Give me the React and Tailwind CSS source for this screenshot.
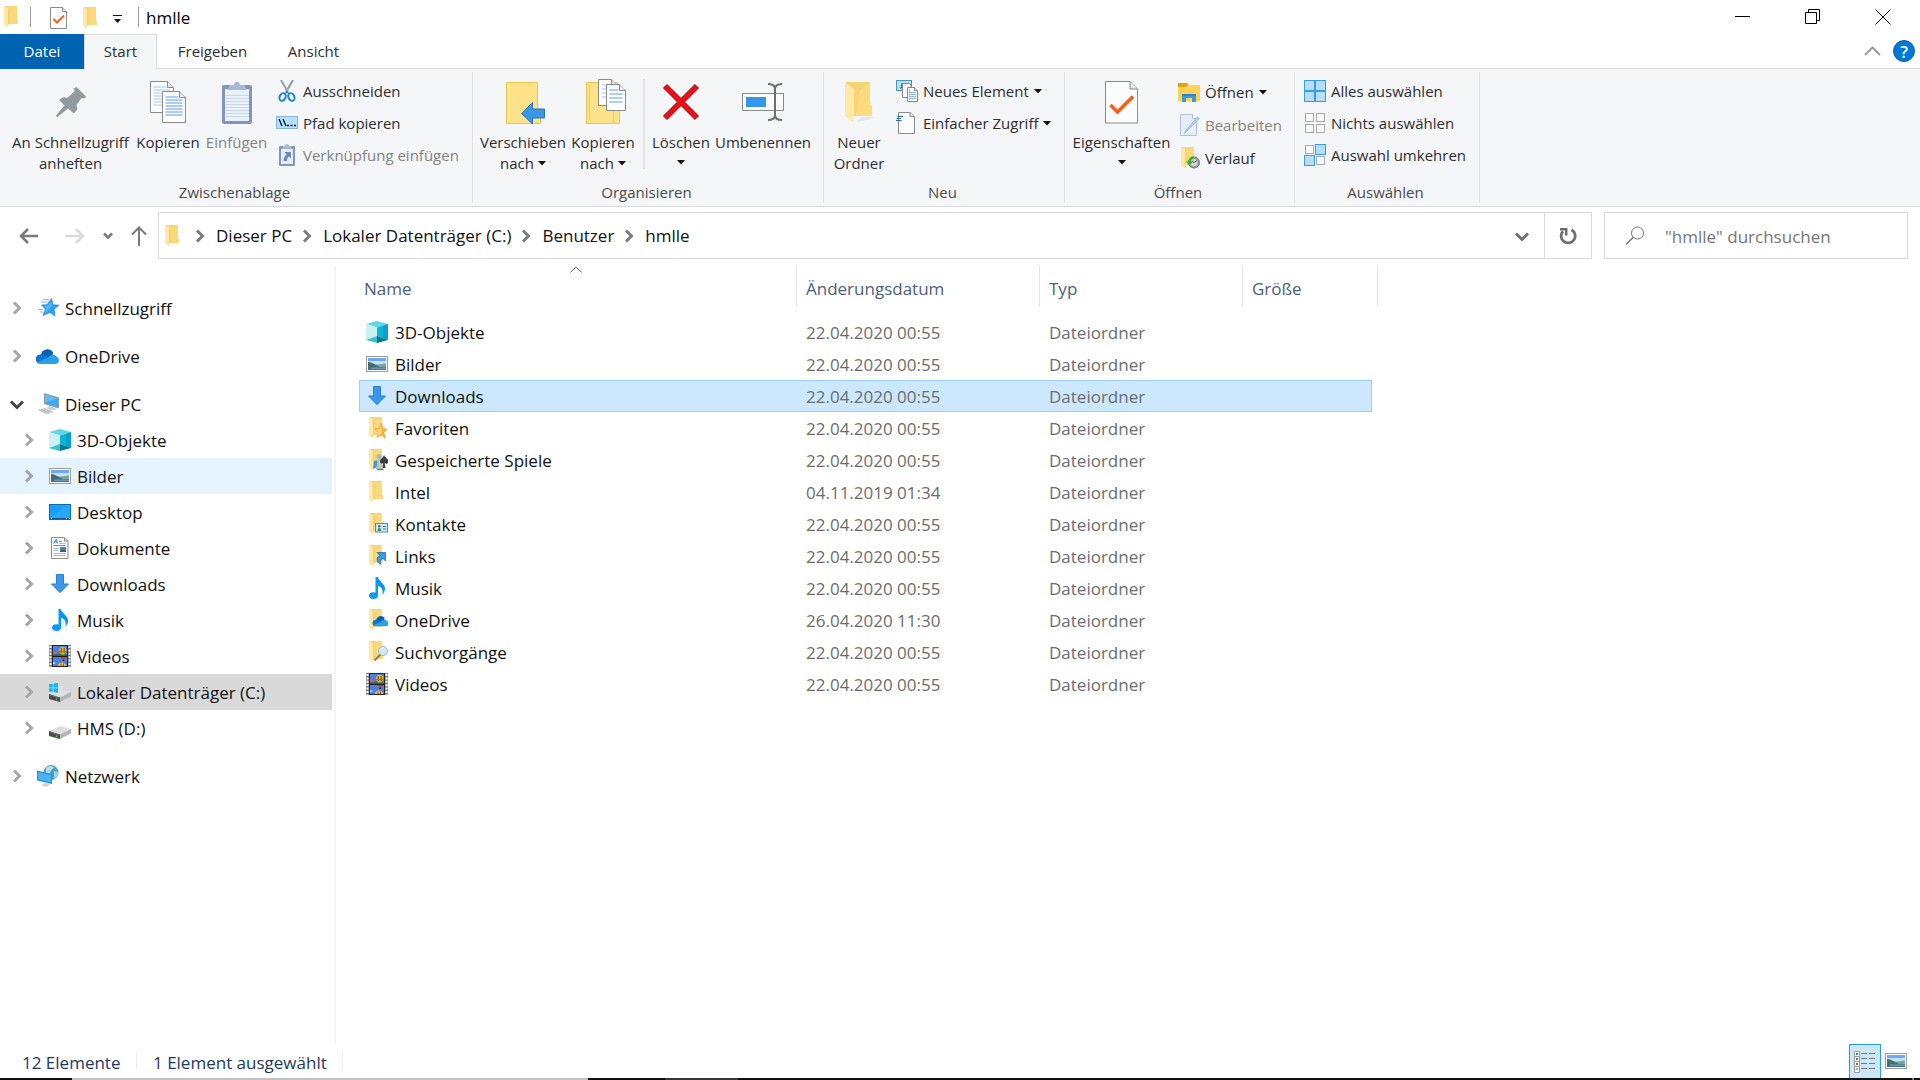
import React from "react";

/* ---------- small icons (22 x 22) ---------- */

const Ico = ({ children, className = "h-[22px] w-[22px]", box = "0 0 22 22" }) => (
  <svg viewBox={box} className={className + " shrink-0"} aria-hidden="true">
    {children}
  </svg>
);

const FolderShape = () => (
  <>
    <path d="M3.500 0H16v13.500l1 1V18H3.500z" fill="#f8d675" />
    <path d="M10 3l6-3v13.500l1 1V18h-7z" fill="#fadb80" opacity=".8" />
    <path d="M3 0l4.500 2.600V19.300L6.500 21.500 3 18.600z" fill="#ffe8a3" />
    <path d="M7.500 2.600V19.300L8 18V3z" fill="#e9c25f" />
  </>
);

const Folder = ({ className }) => <Ico className={className}><FolderShape /></Ico>;

const FolderStar = () => (
  <Ico>
    <FolderShape />
    <path d="M15 6l2 5 4 1.500-3.300 3L19.500 21l-4-3-4.500 2.500 1.300-5L9 12l4.600-.7z" fill="#ffb52e" stroke="#f0912c" strokeWidth=".7" />
    <path d="M15 7l.6 9L11 19.600l1.500-4.400L10 12.400l4-.6z" fill="#ffd987" />
  </Ico>
);

const FolderGames = () => (
  <Ico>
    <FolderShape />
    <path d="M8 12l4-1v7l-5 2z" fill="#4a97d4" />
    <circle cx="13" cy="7.500" r="2.500" fill="#aab4ba" />
    <path d="M11.500 9.500h3l1 7.500 2 3.500h-8l1.500-3.500z" fill="#b9c4cb" />
    <path d="M11 20.500h6.500" stroke="#6e7a82" strokeWidth="1.500" />
    <path d="M18 6c1 3 4.500 3.500 4.500 6.500 0 2-2.500 3-3.800 1.500l.8 5h-3l.7-5c-1.200 1.200-3.200.5-3.200-1.500C14 10 17 9 18 6z" fill="#3a3f42" />
  </Ico>
);

const FolderContact = () => (
  <Ico>
    <FolderShape />
    <rect x="9.500" y="10.500" width="12" height="8.500" fill="#c9ecf8" stroke="#4a90b8" />
    <circle cx="13.300" cy="13.300" r="1.300" fill="#4c6b63" />
    <path d="M11.500 18c0-2 .5-3 1.800-3s1.900 1 1.900 3z" fill="#4c8a63" />
    <path d="M17 13.500h3M17 16h3" stroke="#3579a8" strokeWidth="1" />
  </Ico>
);

const FolderLink = () => (
  <Ico>
    <FolderShape />
    <path d="M11 7.500h8.500V16l-2.600-2.600c-2 1.300-2.800 3-2.100 6C10 17 10 13 13.600 10.100z" fill="#3c97dd" stroke="#1d73bb" strokeWidth=".8" />
  </Ico>
);

const CloudShape = () => (
  <>
    <path d="M6 10a6.500 6.500 0 0 1 12-2.500l-1 5H7z" fill="#0360b5" />
    <path d="M5 9.500c2-.7 4 0 5.500 1l6 3.500L4 18.500A4.600 4.600 0 0 1 5 9.500z" fill="#0b75d0" />
    <path d="M13 12.500c2-3 6-4 8.500-1A4 4 0 0 1 24 15c0 2.500-1.500 4-4 4H5c-1.500 0-2.500-.6-3.200-1.500z" fill="#28a1e8" />
  </>
);

const FolderCloud = () => (
  <Ico>
    <FolderShape />
    <g transform="translate(6 4) scale(.7)"><CloudShape /></g>
  </Ico>
);

const FolderSearch = () => (
  <Ico>
    <FolderShape />
    <path d="M8.500 19.500l6-6" stroke="#8a7768" strokeWidth="2" />
    <circle cx="17" cy="10" r="4.500" fill="#cfe9fa" stroke="#9fb6c6" />
    <path d="M15 9a3 3 0 0 1 3-2.500" stroke="#fff" fill="none" />
  </Ico>
);

const Cube = () => (
  <Ico>
    <path d="M0 3l11-3 11 3-11 3.500z" fill="#5fd6e2" />
    <path d="M0 3l11 3.500V15L0 19z" fill="#c9f2f0" />
    <path d="M11 6.500L22 3v16l-11-4z" fill="#0bb3d6" />
    <path d="M17 5l5-2v16l-5-2z" fill="#0a9fd0" />
    <path d="M0 19l11-4v7z" fill="#34c2d0" />
    <path d="M22 19l-11-4v7z" fill="#04768f" />
  </Ico>
);

const Picture = () => (
  <Ico>
    <rect x=".5" y="3.500" width="21" height="15" fill="#fff" stroke="#9d9d9d" />
    <path d="M2 5h18v7H2z" fill="#6ea8f5" />
    <path d="M2 8h18v3.500H2z" fill="#c4dffb" />
    <path d="M10 12.500c3-1 7-2 10-2v3H9z" fill="#7aa58f" />
    <path d="M2 9c4 0 7 3 12 4.500l-3 1H2z" fill="#48705a" />
    <path d="M2 13.500h18V17H2z" fill="#3f6d93" />
    <path d="M5 15.200h15" stroke="#81abc9" />
  </Ico>
);

const Desktop = () => (
  <Ico>
    <rect x=".5" y="3.500" width="21" height="15" fill="#17a0fb" stroke="#0a6cab" />
    <path d="M1 17L18 4h3v13z" fill="#41b1fb" opacity=".45" />
    <path d="M1 17.500h20" stroke="#0b5c93" />
    <path d="M2 17.500h1M17 17.500h1M20 17.500h1" stroke="#fff" />
  </Ico>
);

const Doc = () => (
  <Ico>
    <path d="M2.500.5h13l3.500 3.500v17.500H2.500z" fill="#fafbfb" stroke="#8c8c8c" />
    <path d="M15.500.5V4H19" fill="#e4e4e4" stroke="#8c8c8c" />
    <path d="M4.500 6.500l3-4.500.8 4.500M6 5.200h2" stroke="#2a8fdc" fill="none" />
    <path d="M10 4.500h3M4.500 8.500h12" stroke="#2aa0e8" />
    <path d="M10 6.500h6.500" stroke="#8ec9f0" />
    <path d="M4.500 11.500h5M4.500 13.500h5M4.500 16.500h12M4.500 18.500h12" stroke="#b3b3b3" />
    <rect x="11" y="10" width="6" height="5" fill="#3b87c8" />
    <path d="M11 14l3-2 3 2v1h-6z" fill="#3c6c4d" />
  </Ico>
);

const Download = () => (
  <Ico>
    <path d="M7.500 1.500h7V11h5L11 19.700 2.500 11h5z" fill="#3a98ea" stroke="#2b80cc" />
  </Ico>
);

const Note = () => (
  <Ico>
    <ellipse cx="7.500" cy="18.600" rx="4.500" ry="3.400" fill="#0a9bf5" />
    <path d="M9.500 19V0h2.500c.5 4 7 6.500 7 11.500 0 2.500-1.200 4.500-2.600 6.500.5-3.500.4-8-4.400-9V19z" fill="#0a9bf5" />
    <path d="M12 4c.8 3 6 4.500 6 9" stroke="#1079d4" fill="none" strokeWidth=".8" />
  </Ico>
);

const Film = () => (
  <Ico>
    <path d="M0 0h22v22H0z" fill="#7b7b7b" />
    <path d="M1.500 1v21M20.500 1v21" stroke="#fff" strokeWidth="2" strokeDasharray="2 1.400" />
    <path d="M3 0h16v22H3z" fill="#262626" />
    <path d="M4 1h14v10H4zM4 12h14v9H4z" fill="#4a80e0" />
    <path d="M4 9l5-.5 9 1V11H4z" fill="#2c6e4a" />
    <path d="M4 5.500l5 3-5 1z" fill="#e8508c" />
    <path d="M10 5.500a3.700 3.700 0 0 1 7.400 0c0 1.800-1.600 3-2.400 4h-2.600c-.8-1-2.400-2.200-2.400-4z" fill="#e0b51e" />
    <path d="M12.300 3v5M15.200 3v5" stroke="#8a3a1c" strokeWidth=".9" />
    <path d="M10 6.500h7.400" stroke="#4f8a2c" strokeWidth=".8" />
    <path d="M11.500 12h5.500l-1.700 2.500h-2z" fill="#d43a2f" />
    <path d="M13.500 14.500h1.600V16h-1.600z" fill="#222" />
    <path d="M9 21a4 3.500 0 0 1 8 0z" fill="#e9c229" />
    <path d="M12 18.500v2.500M14.500 18.500v2.500" stroke="#c43a26" />
    <path d="M4 17l3 1-3 1.500z" fill="#c9dcf8" />
    <path d="M3 11.500h16" stroke="#1c1c1c" />
  </Ico>
);

const Star = () => (
  <Ico>
    <path d="M14.500 1.500l1.500 6.300 6 .4-5 4 1 6.800-5.200-3.500L6 18.500l2.500-6.300L4.500 8l5.500-.2z" fill="#2ba2ee" stroke="#1387d6" strokeWidth=".7" />
    <path d="M14 4l1 5-5 6-2 1 1.700-4.500L7 9l4-.5z" fill="#6cc3f8" opacity=".6" />
    <path d="M6 2.500h6M4 5h7M1 12.500h5M3 15h4" stroke="#79c3ee" />
  </Ico>
);

const Cloud = () => <Ico box="1 0 24 22" className="h-[22px] w-6"><CloudShape /></Ico>;

const Computer = () => (
  <Ico>
    <path d="M7 0l15 4.500v11L7 11z" fill="#8d99a3" />
    <path d="M8 1.500l13 4v8.500L8 10z" fill="#37aaf5" />
    <path d="M8 1.500l13 4L8 9z" fill="#7ccbfa" opacity=".6" />
    <path d="M12 13l6 2 1.500 1.500-5 .8-5-2z" fill="#c4ccd1" />
    <path d="M0 16.500l8-1.500 9 4-6.500 2.500z" fill="#d3d9dd" />
    <path d="M2 17l7 3.500M4 16.500l8 3.500M7 16l7 3" stroke="#9ba6ad" strokeWidth=".7" />
  </Ico>
);

const DriveShape = () => (
  <>
    <path d="M0 13l11-5 11 3-11 6z" fill="#dfdfdf" />
    <path d="M0 13l11 3.500V21L0 18z" fill="#4a4a4a" />
    <path d="M11 16.500L22 11v4.500L11 21z" fill="#b4b4b4" />
    <path d="M7.500 17.500v1.800" stroke="#45d13c" strokeWidth="1.500" />
    <path d="M1 14l9 3" stroke="#808080" strokeWidth=".7" />
  </>
);

const Drive = () => <Ico><g transform="translate(0 1)"><DriveShape /></g></Ico>;

const SystemDrive = () => (
  <Ico>
    <DriveShape />
    <path d="M0 3.200l3.800-.5v3.800H0zM4.600 2.600L9 2v4.500H4.600zM0 7.300h3.800v3.800L0 10.600zM4.600 7.300H9v4.500l-4.400-.6z" fill="#12b6ee" />
  </Ico>
);

const Network = () => (
  <Ico>
    <circle cx="14" cy="7.500" r="7.500" fill="#4f9fc4" />
    <path d="M9 2.500c3-2 6-2 8 0l-3 3-2 5-3-2z" fill="#b3dcec" />
    <path d="M17 6l4 1c0 4-2 5-4 7z" fill="#a4d3e6" />
    <path d="M0 5.500L15 9v10L0 15.500z" fill="#2a8fd0" />
    <path d="M1 7l13 3v7.500L1 14.300z" fill="#45b3f6" />
    <path d="M5 19l5-1.500 3 1.500-2 2.500H6z" fill="#cfd6da" />
  </Ico>
);

/* ---------- ribbon icons ---------- */

const Pin = () => (
  <svg viewBox="0 0 30 30" className="h-[30px] w-[30px]" aria-hidden="true">
    <path d="M20.500 0L30 9.500l-1.500 2-3-.5-5 7 1 4-3.500 4.500-6-5L1.500 30 0 29.500.500 28 8.500 18.500 3 13l4-2.700 4.500.5 7-6.300-.5-3z" fill="#8f9ba1" />
  </svg>
);

const PageLines = ({ x, y, w, h, step, color = "#5f9bea" }) => (
  <g>
    <path d={`M${x} ${y}h${w - 6}l6 6v${h - 6}h-${w}z`} fill="#fbfcfd" stroke="#8a8a8a" />
    <path d={`M${x + w - 6} ${y}v6h6`} fill="#e8eaeb" stroke="#8a8a8a" />
    {Array.from({ length: Math.floor((h - 8) / step) }, (_, i) => (
      <path key={i} d={`M${x + 3} ${y + 5.5 + i * step}h${i < 1 ? w - 10 : w - 6}`} stroke={color} />
    ))}
  </g>
);

const CopyBig = () => (
  <svg viewBox="0 0 38 43" className="h-[43px] w-[38px]" aria-hidden="true">
    <PageLines x={1.5} y={0.5} w={23} h={31} step={3} color="#a7c8f2" />
    <PageLines x={13.5} y={10.5} w={23} h={31} step={3} />
  </svg>
);

const PasteBig = () => (
  <svg viewBox="0 0 30 43" className="h-[43px] w-[30px]" aria-hidden="true">
    <rect x="0" y="4" width="30" height="39" rx="2" fill="#8096bd" />
    <path d="M3 8h24v32H3z" fill="#e9f1fa" />
    <path d="M8 4h4a3 3 0 0 1 6 0h4l3 5H5z" fill="#a9b9d2" />
    <path d="M3 14.500h24M3 17.500h24M3 20.500h24M3 23.500h24M3 26.500h24M3 29.500h24M3 32.500h24M3 35.500h24" stroke="#cbd7e8" />
  </svg>
);

const MoveTo = () => (
  <svg viewBox="0 0 40 46" className="h-[46px] w-10" aria-hidden="true">
    <path d="M.5 3.500h31V28l3 3v13.500H.500z" fill="#fde28a" stroke="#efc64d" />
    <path d="M3.500 6v36" stroke="#fff3c4" />
    <path d="M15.500 34.500L26.500 23.500v6.500h12v9h-12v6z" fill="#3a97e6" stroke="#2277c0" />
  </svg>
);

const CopyTo = () => (
  <svg viewBox="0 0 41 46" className="h-[46px] w-[41px]" aria-hidden="true">
    <path d="M.5 3.500h31V28l2 3v13.500H.500z" fill="#fde28a" stroke="#efc64d" />
    <path d="M3.500 6v36M27.500 30v14" stroke="#f0cb5c" />
    <PageLines x={12.5} y={0.5} w={19} h={26} step={4} color="#a7c8f2" />
    <PageLines x={20.5} y={5.5} w={19} h={26} step={4} />
  </svg>
);

const DeleteX = () => (
  <svg viewBox="0 0 38 38" className="h-[38px] w-[38px]" aria-hidden="true">
    <path d="M3 3l32 32M35 3L3 35" stroke="#a8121b" strokeWidth="6" />
    <path d="M3.500 3.500l31 31M34.500 3.500l-31 31" stroke="#e90f17" strokeWidth="4.500" />
  </svg>
);

const Rename = () => (
  <svg viewBox="0 0 42 38" className="h-[38px] w-[42px]" aria-hidden="true">
    <rect x=".5" y="10.500" width="41" height="17" fill="#fbfbfb" stroke="#8a8a8a" />
    <rect x="4" y="14" width="20" height="10" fill="#3398e8" />
    <path d="M26 1c4 0 7 1 7 5v26c0 4-3 5-7 5M40 1c-4 0-7 1-7 5v26c0 4 3 5 7 5" stroke="#6e6e6e" strokeWidth="2" fill="none" />
  </svg>
);

const NewFolder = () => (
  <svg viewBox="0 0 30 41" className="h-[41px] w-[30px]" aria-hidden="true">
    <path d="M18 35h12l-3 2-15 3z" fill="#dcdcdc" opacity=".6" />
    <path d="M1 0h25v21l2 3v10H9z" fill="#f6d473" />
    <path d="M16 8l10-8v21l2 3v10H12z" fill="#fbdd80" opacity=".8" />
    <path d="M1 0l9 7v27l-1 6-8-6z" fill="#ffe9a8" />
  </svg>
);

const Properties = () => (
  <svg viewBox="0 0 33 43" className="h-[43px] w-[33px]" aria-hidden="true">
    <path d="M.5.5H25l7.500 7.500v34H.500z" fill="#fbfcfd" stroke="#8a8a8a" />
    <path d="M25 .5V8h7.500" fill="#e9ebec" stroke="#8a8a8a" />
    <path d="M5.500 24l7 7L28 15.500" stroke="#f2601a" strokeWidth="3.600" fill="none" />
  </svg>
);

const PropertiesSmall = () => (
  <svg viewBox="0 0 17 22" className="h-[22px] w-[17px]" aria-hidden="true">
    <path d="M.5.5h12l4 4v17H.500z" fill="#fbfcfd" stroke="#8a8a8a" />
    <path d="M12.500.5v4h4" fill="#e9ebec" stroke="#8a8a8a" />
    <path d="M3.500 12l3.500 3.500 7-7" stroke="#f2601a" strokeWidth="2" fill="none" />
  </svg>
);

const Scissors = () => (
  <Ico>
    <path d="M5 0l7 12M17 0l-7 12" stroke="#8d9aa2" strokeWidth="2" />
    <path d="M6 0l6 11" stroke="#c5ccd0" strokeWidth=".7" />
    <ellipse cx="6.600" cy="17" rx="2.900" ry="4" transform="rotate(25 6.600 17)" fill="none" stroke="#1a86cf" strokeWidth="2" />
    <ellipse cx="15.400" cy="17" rx="2.900" ry="4" transform="rotate(-25 15.400 17)" fill="none" stroke="#1a86cf" strokeWidth="2" />
    <path d="M11 10.500l2.500 3.500-2.500-1-2.500 1z" fill="#1a86cf" />
  </Ico>
);

const PathIcon = () => (
  <Ico>
    <rect x=".5" y="4.500" width="21" height="12" fill="#b5e0fb" stroke="#86b7d8" />
    <path d="M3 7l3 7M7 7l3 7" stroke="#111" strokeWidth="1.300" />
    <path d="M11 13.500h2M14.500 13.500h2M18 13.500h2" stroke="#111" strokeWidth="1.600" />
  </Ico>
);

const PasteLink = () => (
  <Ico>
    <rect x="3" y="2" width="16" height="20" rx="1" fill="#8096bd" />
    <path d="M5 5h12v15H5z" fill="#e3ecf7" />
    <path d="M7 2h2a2 2 0 0 1 4 0h2l1 3H6z" fill="#a9b9d2" />
    <path d="M8.500 8H15v6.500l-2-2c-1.500 1-2 2.500-2 4.500H7.500c0-3 1-5 3-6.500z" fill="#7089b4" />
  </Ico>
);

const NewItem = () => (
  <Ico>
    <rect x=".5" y=".5" width="15" height="10" fill="#aee2f3" stroke="#4a94b5" />
    <path d="M4 9l1-3 .5-3h2l.5 4z" fill="#54643e" />
    <path d="M6.500 3.500h7l1.500 1.500v12.500H6.500z" fill="#fbfbfb" stroke="#8a8a8a" />
    <path d="M11.500 7.500h7l3 3v11h-10z" fill="#fbfbfb" stroke="#8a8a8a" />
    <path d="M18.500 7.500v3h3" fill="#e4e4e4" stroke="#8a8a8a" />
    <path d="M13 12.500h7M13 14.500h7M13 16.500h7M13 18.500h7" stroke="#90b9ee" />
    <path d="M13.500 9v11" stroke="#f1a0a0" />
  </Ico>
);

const EasyAccess = () => (
  <Ico>
    <path d="M2.500.5H14l4.500 4v17h-16z" fill="#fbfcfd" stroke="#8a8a8a" />
    <path d="M14 .5v4h4.500" fill="#e9ebec" stroke="#8a8a8a" />
    <path d="M1.500 4.500H7M.5 6.500H5M0 8.500h5.500" stroke="#2a66a8" strokeWidth="1.200" />
  </Ico>
);

const OpenIcon = () => (
  <Ico>
    <path d="M0 2h9l2 2h10v3H0z" fill="#e3a215" />
    <path d="M0 6h8l2-2h12v16H0z" fill="#ffd257" />
    <path d="M4 21v-8h14v8h-4v-4H8v4z" fill="#3a9be3" />
    <path d="M4 13h14v2H4z" fill="#2586cf" />
  </Ico>
);

const EditIcon = () => (
  <Ico>
    <path d="M2.500.5h12l4 4v17h-16z" fill="#e6eefa" stroke="#b0c1dc" />
    <path d="M14.500.5v4h4" fill="#f3f7fc" stroke="#b0c1dc" />
    <path d="M21.500 4.500L9 17l-3 2.500L8 16 19.500 3z" fill="#b7cbe6" stroke="#9ab1d2" strokeWidth=".7" />
  </Ico>
);

const HistoryIcon = () => (
  <Ico>
    <FolderShape />
    <circle cx="16" cy="15.500" r="5.500" fill="#a0a3a3" stroke="#6a6e6e" />
    <circle cx="16" cy="15.500" r="3.500" fill="#d5d8d8" />
    <path d="M16 15.500l3-2M16 15.500l-2-1.500" stroke="#444" />
    <path d="M15.500 9.500c-3 0-5 2-5 5H8l3.500 4 3.500-4h-2c0-1.500 1-2.500 2.500-2.700z" fill="#2db52c" />
  </Ico>
);

const Cell = ({ x, y, on, s = 9 }) => (
  <rect x={x} y={y} width={s} height={s} fill={on ? "#b6defb" : "#fafafa"} stroke={on ? "#3d9be0" : "#a9a9a9"} />
);

const SelectAll = () => (
  <Ico>
    <path d="M0 0h22v22H0z" fill="#3d9be0" />
    <path d="M1 1h9v9H1zM12 1h9v9h-9zM1 12h9v9H1zM12 12h9v9h-9z" fill="#b6defb" />
  </Ico>
);

const SelectNone = () => (
  <Ico>
    <Cell x={1.5} y={1.5} s={8} /><Cell x={12.5} y={1.5} s={8} />
    <Cell x={1.5} y={12.5} s={8} /><Cell x={12.5} y={12.5} s={8} />
  </Ico>
);

const SelectInvert = () => (
  <Ico>
    <Cell x={1.5} y={1.5} s={8} /><Cell x={11.5} y={0.5} s={10} on />
    <Cell x={0.5} y={11.5} s={10} on /><Cell x={12.5} y={12.5} s={8} />
  </Ico>
);

const Caret = () => (
  <svg viewBox="0 0 8 5" className="h-[5px] w-2 shrink-0" aria-hidden="true">
    <path d="M0 0h8L4 4.500z" fill="#111" />
  </svg>
);

const Chevron = ({ className, dir = "right" }) => (
  <svg viewBox="0 0 16 16" className={"h-4 w-4 shrink-0 " + className} aria-hidden="true">
    <path
      d={dir === "right" ? "M5 2.500L10.500 8 5 13.500" : "M2 5.500l6 6 6-6"}
      fill="none"
      stroke="currentColor"
      strokeWidth="3"
    />
  </svg>
);

/* ---------- ribbon ---------- */

const BigButton = ({ icon, lines, className, caret, disabled, iconClass = "" }) => (
  <button
    type="button"
    disabled={disabled}
    className={"flex shrink-0 flex-col items-center whitespace-nowrap leading-[21px] " + className + (disabled ? " text-[#838383]" : "")}
  >
    <span className={"flex h-[60px] items-center justify-center " + iconClass}>{icon}</span>
    {lines.map((line, i) => (
      <span key={line} className="flex h-[21px] items-center gap-1">
        {line}
        {caret && i > 0 && <Caret />}
      </span>
    ))}
    {caret && lines.length === 1 && <span className="flex h-[18px] items-center"><Caret /></span>}
  </button>
);

const SmallButton = ({ icon, label, caret, disabled }) => (
  <button
    type="button"
    disabled={disabled}
    className={"flex h-8 items-center gap-[5px] whitespace-nowrap " + (disabled ? "text-[#838383]" : "")}
  >
    {icon}
    <span>{label}</span>
    {caret && <Caret />}
  </button>
);

const Group = ({ label, className, children }) => (
  <section aria-label={label} className={"flex shrink-0 flex-col border-r border-[#e0e1e2] " + className}>
    <div className="flex flex-1">{children}</div>
    <div className="flex h-[21px] items-center justify-center pr-[3px] text-[#4a4a4a]">{label}</div>
  </section>
);

const Ribbon = () => (
  <div className="flex h-[138px] overflow-hidden border-b border-[#d9dadb] bg-[#f5f6f7] pb-[3px] pt-[3px] text-[15px] text-[#2d2d2d]">
    <Group label="Zwischenablage" className="w-[473px]">
      <BigButton icon={<Pin />} lines={["An Schnellzugriff", "anheften"]} className="ml-1 w-[133px]" />
      <BigButton icon={<CopyBig />} lines={["Kopieren"]} className="w-[62px]" />
      <BigButton icon={<PasteBig />} lines={["Einfügen"]} className="w-[75px]" disabled />
      <div className="ml-[2px] pt-[3px]">
        <SmallButton icon={<Scissors />} label="Ausschneiden" />
        <SmallButton icon={<PathIcon />} label="Pfad kopieren" />
        <SmallButton icon={<PasteLink />} label="Verknüpfung einfügen" disabled />
      </div>
    </Group>
    <Group label="Organisieren" className="w-[351px]">
      <BigButton icon={<MoveTo />} lines={["Verschieben", "nach"]} className="ml-[5px] w-[90px]" iconClass="pl-[6px]" caret />
      <BigButton icon={<CopyTo />} lines={["Kopieren", "nach"]} className="w-[70px]" iconClass="pl-[6px]" caret />
      <div className="mb-[13px] ml-[5px] mt-[7px] w-[2px] bg-[#dfe1e3]" />
      <BigButton icon={<DeleteX />} lines={["Löschen"]} className="ml-[5px] w-[62px]" caret />
      <BigButton icon={<Rename />} lines={["Umbenennen"]} className="w-[102px]" />
    </Group>
    <Group label="Neu" className="w-[241px]">
      <BigButton icon={<NewFolder />} lines={["Neuer", "Ordner"]} className="w-[70px]" />
      <div className="ml-[2px] pt-[3px]">
        <SmallButton icon={<NewItem />} label="Neues Element" caret />
        <SmallButton icon={<EasyAccess />} label="Einfacher Zugriff" caret />
      </div>
    </Group>
    <Group label="Öffnen" className="w-[230px]">
      <BigButton icon={<Properties />} lines={["Eigenschaften"]} className="w-[113px]" caret />
      <div className="flex flex-col gap-px pt-1">
        <SmallButton icon={<OpenIcon />} label="Öffnen" caret />
        <SmallButton icon={<EditIcon />} label="Bearbeiten" disabled />
        <SmallButton icon={<HistoryIcon />} label="Verlauf" />
      </div>
    </Group>
    <Group label="Auswählen" className="w-[185px]">
      <div className="ml-[9px] pt-[3px]">
        <SmallButton icon={<SelectAll />} label="Alles auswählen" />
        <SmallButton icon={<SelectNone />} label="Nichts auswählen" />
        <SmallButton icon={<SelectInvert />} label="Auswahl umkehren" />
      </div>
    </Group>
  </div>
);

/* ---------- title bar and tabs ---------- */

const TitleBar = () => (
  <header className="flex h-[34px] items-center">
    <span className="w-[19px] pl-[1px]"><Folder /></span>
    <span className="ml-[11px] h-5 w-px bg-[#9a9a9a]" />
    <button type="button" aria-label="Eigenschaften" className="ml-[19px] pt-[2px]"><PropertiesSmall /></button>
    <button type="button" aria-label="Neuer Ordner" className="ml-[13px] pt-[2px]"><Folder /></button>
    <button type="button" aria-label="Symbolleiste anpassen" className="ml-[11px]">
      <svg viewBox="0 0 9 9" className="mt-1 h-[9px] w-[9px]" aria-hidden="true">
        <path d="M0 .5h9" stroke="#111" /><path d="M1 4h7L4.500 8z" fill="#111" />
      </svg>
    </button>
    <span className="ml-4 h-5 w-px bg-[#9a9a9a]" />
    <h1 className="ml-[7px] pt-[2px] text-[17px] text-black">hmlle</h1>
    <div className="ml-auto mr-[2px] flex h-full">
      <button type="button" aria-label="Minimieren" className="flex w-[70px] items-center justify-center">
        <svg viewBox="0 0 16 16" className="h-4 w-4" aria-hidden="true"><path d="M0 7.500h15" stroke="#000" /></svg>
      </button>
      <button type="button" aria-label="Wiederherstellen" className="flex w-[70px] items-center justify-center">
        <svg viewBox="0 0 16 16" className="h-4 w-4" aria-hidden="true">
          <path d="M.5 3.500h11v11H.500zM3.500 3V.5h11v11H12" stroke="#000" fill="none" />
        </svg>
      </button>
      <button type="button" aria-label="Schließen" className="flex w-[70px] items-center justify-center">
        <svg viewBox="0 0 16 16" className="h-4 w-4" aria-hidden="true"><path d="M.5.5l15 15M15.500.5l-15 15" stroke="#000" /></svg>
      </button>
    </div>
  </header>
);

const Tabs = () => (
  <nav className="flex h-[35px] text-[15px] text-[#2d2d2d]">
    <button type="button" className="w-[84px] bg-[#0063b1] text-white">Datei</button>
    <button type="button" className="w-[73px] border-x border-t border-[#dadbdc] bg-[#f5f6f7] pb-[2px]">Start</button>
    <div className="flex flex-1 items-center border-b border-[#dadbdc]">
      <button type="button" className="w-[111px]">Freigeben</button>
      <button type="button" className="w-[91px]">Ansicht</button>
      <button type="button" aria-label="Menüband minimieren" className="ml-auto">
        <svg viewBox="0 0 17 10" className="h-[10px] w-[17px]" aria-hidden="true">
          <path d="M1 9l7.500-7.500L16 9" fill="none" stroke="#9b9b9b" strokeWidth="2" />
        </svg>
      </button>
      <button
        type="button"
        aria-label="Hilfe"
        className="ml-3 mr-[5px] flex h-[22px] w-[22px] items-center justify-center rounded-full border border-[#0b5fae] bg-[#0078d7] text-[17px] font-semibold leading-none text-white"
      >
        ?
      </button>
    </div>
  </nav>
);

/* ---------- address row ---------- */

const crumbs = ["Dieser PC", "Lokaler Datenträger (C:)", "Benutzer", "hmlle"];

const AddressRow = () => (
  <div className="flex h-[59px] items-center pb-[7px] pr-3 pt-[5px] text-[17px] text-[#111]">
    <div className="flex w-[158px] shrink-0 items-center text-[#7a7a7a]">
      <button type="button" aria-label="Zurück" className="ml-[19px]">
        <svg viewBox="0 0 20 16" className="h-4 w-5" aria-hidden="true"><path d="M9 1L2 8l7 7M2 8h17" fill="none" stroke="currentColor" strokeWidth="2.600" /></svg>
      </button>
      <button type="button" aria-label="Vorwärts" className="ml-[26px] text-[#dadada]" disabled>
        <svg viewBox="0 0 20 16" className="h-4 w-5" aria-hidden="true"><path d="M11 1l7 7-7 7M18 8H0" fill="none" stroke="currentColor" strokeWidth="2.600" /></svg>
      </button>
      <button type="button" aria-label="Zuletzt besuchte Orte" className="ml-[18px]">
        <svg viewBox="0 0 10 8" className="h-2 w-[10px]" aria-hidden="true"><path d="M1 1.500l4 4 4-4" fill="none" stroke="currentColor" strokeWidth="2.600" /></svg>
      </button>
      <button type="button" aria-label="Nach oben" className="ml-[18px]">
        <svg viewBox="0 0 16 20" className="h-5 w-4" aria-hidden="true"><path d="M1 8.500l7-7 7 7M8 2v18" fill="none" stroke="currentColor" strokeWidth="2" /></svg>
      </button>
    </div>
    <div className="flex h-[47px] min-w-0 flex-1 items-center border border-[#d9d9d9] pl-[3px]">
      <Folder />
      <ol className="ml-[2px] flex items-center whitespace-nowrap">
        {crumbs.map((c) => (
          <li key={c} className="flex items-center">
            <Chevron className="ml-[6px] mr-2 text-[#7a7a7a]" />
            <a href="#ordner" className="mr-px">{c}</a>
          </li>
        ))}
      </ol>
      <button type="button" aria-label="Vorherige Orte" className="ml-auto mr-[14px] text-[#707070]"><Chevron dir="down" className="" /></button>
      <button type="button" aria-label="Aktualisieren" className="flex h-full w-[47px] items-center justify-center border-l border-[#d9d9d9]">
        <svg viewBox="0 0 18 18" className="h-[18px] w-[18px]" aria-hidden="true">
          <path d="M12.500 2.800A7 7 0 1 1 4 4.200" fill="none" stroke="#6f6f6f" strokeWidth="2.800" />
          <path d="M1 1h7.500v7.500H6V3.500H1z" fill="#6f6f6f" />
        </svg>
      </button>
    </div>
    <label className="ml-3 flex h-[47px] w-[304px] shrink-0 items-center border border-[#d9d9d9] pl-5">
      <svg viewBox="0 0 20 20" className="h-5 w-5" aria-hidden="true">
        <circle cx="12.500" cy="7" r="6" fill="none" stroke="#757575" />
        <path d="M8.300 11.300L1 18.500" stroke="#757575" strokeWidth="1.500" />
      </svg>
      <input
        type="search"
        aria-label="Suchen"
        placeholder={'"hmlle" durchsuchen'}
        className="ml-5 w-[220px] bg-transparent pt-[2px] outline-none placeholder:text-[#767676]"
      />
    </label>
  </div>
);

/* ---------- navigation pane ---------- */

const tree = [
  [{ label: "Schnellzugriff", icon: <Star /> }],
  [{ label: "OneDrive", icon: <Cloud /> }],
  [
    { label: "Dieser PC", icon: <Computer />, open: true },
    { label: "3D-Objekte", icon: <Cube />, child: true },
    { label: "Bilder", icon: <Picture />, child: true, state: "bg-[#e5f3ff]" },
    { label: "Desktop", icon: <Desktop />, child: true },
    { label: "Dokumente", icon: <Doc />, child: true },
    { label: "Downloads", icon: <Download />, child: true },
    { label: "Musik", icon: <Note />, child: true },
    { label: "Videos", icon: <Film />, child: true },
    { label: "Lokaler Datenträger (C:)", icon: <SystemDrive />, child: true, state: "bg-[#d9d9d9]" },
    { label: "HMS (D:)", icon: <Drive />, child: true },
  ],
  [{ label: "Netzwerk", icon: <Network /> }],
];

const Sidebar = () => (
  <aside className="w-[336px] shrink-0 border-r-2 border-[#f5f5f5] pr-[2px] pt-6 text-[17px] text-[#111]">
    <div className="flex flex-col gap-3">
      {tree.map((group) => (
        <ul key={group[0].label}>
          {group.map((n) => (
            <li key={n.label}>
              <button
                type="button"
                className={"flex h-9 w-full items-center whitespace-nowrap " + (n.child ? "pl-[21px] " : "pl-[9px] ") + (n.state || "")}
              >
                <Chevron dir={n.open ? "down" : "right"} className={n.open ? "text-[#444]" : "text-[#a6a6a6]"} />
                <span className="ml-[11px] flex w-6 justify-center">{n.icon}</span>
                <span className="ml-[5px] pt-[2px]">{n.label}</span>
              </button>
            </li>
          ))}
        </ul>
      ))}
    </div>
  </aside>
);

/* ---------- file list ---------- */

const D = "22.04.2020 00:55";
const files = [
  ["3D-Objekte", D, <Cube />],
  ["Bilder", D, <Picture />],
  ["Downloads", D, <Download />],
  ["Favoriten", D, <FolderStar />],
  ["Gespeicherte Spiele", D, <FolderGames />],
  ["Intel", "04.11.2019 01:34", <Folder />],
  ["Kontakte", D, <FolderContact />],
  ["Links", D, <FolderLink />],
  ["Musik", D, <Note />],
  ["OneDrive", "26.04.2020 11:30", <FolderCloud />],
  ["Suchvorgänge", D, <FolderSearch />],
  ["Videos", D, <Film />],
];

const FileList = () => (
  <main className="min-w-0 flex-1 pl-[23px] text-[17px]">
    <table className="table-fixed border-separate border-spacing-0">
      <colgroup>
        <col className="w-[438px]" />
        <col className="w-[243px]" />
        <col className="w-[203px]" />
        <col className="w-[129px]" />
        <col className="w-[6px]" />
      </colgroup>
      <thead>
        <tr className="h-[41px] text-left text-[#4c607a]">
          <th className="relative border-r border-[#e5e5e5] pl-[5px] pt-1 font-normal">
            Name
            <svg viewBox="0 0 12 7" className="absolute left-[211px] top-0 h-[7px] w-3" aria-hidden="true">
              <path d="M.5 6.500L6 1l5.500 5.500" fill="none" stroke="#6b6b6b" />
            </svg>
          </th>
          <th className="border-r border-[#e5e5e5] pl-[9px] pt-1 font-normal">Änderungsdatum</th>
          <th className="border-r border-[#e5e5e5] pl-[9px] pt-1 font-normal">Typ</th>
          <th className="pl-[9px] pt-1 font-normal">Größe</th>
          <th className="border-r border-[#e5e5e5]" aria-label="Rand" />
        </tr>
      </thead>
      <tbody>
        <tr className="h-[9px]"><td colSpan="5" /></tr>
        {files.map(([name, date, icon]) => {
          const sel = name === "Downloads";
          const cell = sel ? "border-y border-[#99d1ff] bg-[#cce8ff] " : "";
          return (
            <tr key={name} className="h-8 text-[#6d6d6d]">
              <td className={cell + (sel ? "border-l pl-[6px]" : "pl-[7px]")}>
                <span className="flex items-center gap-[7px] text-[#111]">{icon}<span className="pt-[2px]">{name}</span></span>
              </td>
              <td className={cell + "pl-[9px] pt-[2px]"}>{date}</td>
              <td className={cell + "pl-[9px] pt-[2px]"}>Dateiordner</td>
              <td className={cell + (sel ? "border-r" : "")} />
              <td />
            </tr>
          );
        })}
      </tbody>
    </table>
  </main>
);

/* ---------- status bar ---------- */

const DetailsView = () => (
  <svg viewBox="0 0 22 22" className="h-[22px] w-[22px]" aria-hidden="true">
    <path d="M.5.5h5v21h-5z" fill="#fff" stroke="#9a9a9a" />
    <path d="M0 5.500h6M0 10.500h6M0 15.500h6" stroke="#9a9a9a" />
    <path d="M2 2h2v2H2z" fill="#2f7fa8" /><path d="M2 7h2v2H2z" fill="#5a8f3a" />
    <path d="M2 12h2v2H2z" fill="#c0501c" /><path d="M2 17h2v2H2z" fill="#9aa" />
    <path d="M7 2.500h6M15 2.500h6M7 7.500h6M15 7.500h6M7 12.500h6M15 12.500h6M7 17.500h6M15 17.500h6" stroke="#757575" />
  </svg>
);

const StatusBar = () => (
  <footer className="flex h-[34px] items-center text-[17px] text-[#1e395b]">
    <span className="ml-[22px] w-[114px] whitespace-nowrap pt-1">12 Elemente</span>
    <span className="h-[18px] w-px bg-[#ececec]" />
    <span className="ml-4 w-[189px] whitespace-nowrap pt-1">1 Element ausgewählt</span>
    <span className="h-[18px] w-px bg-[#ececec]" />
    <button type="button" aria-label="Details" className="ml-auto flex h-full w-8 items-center justify-center border border-b-0 border-[#26a0da] bg-[#cce8f6]">
      <DetailsView />
    </button>
    <button type="button" aria-label="Große Symbole" className="ml-1 mr-[13px]"><Picture /></button>
  </footer>
);

export default function App() {
  return (
    <div className="flex min-h-screen flex-col bg-white font-['Open_Sans','Noto_Sans',sans-serif]">
      <TitleBar />
      <Tabs />
      <Ribbon />
      <AddressRow />
      <div className="flex flex-1">
        <Sidebar />
        <FileList />
      </div>
      <StatusBar />
      <div className="flex h-[2px] bg-[#101114]">
        <span className="ml-[72px] w-[516px] bg-[#c2c2c2]" />
        <span className="ml-[77px] w-[73px] bg-[#333538]" />
        <span className="ml-auto mr-[6px] w-[2px] bg-[#777]" />
      </div>
    </div>
  );
}
